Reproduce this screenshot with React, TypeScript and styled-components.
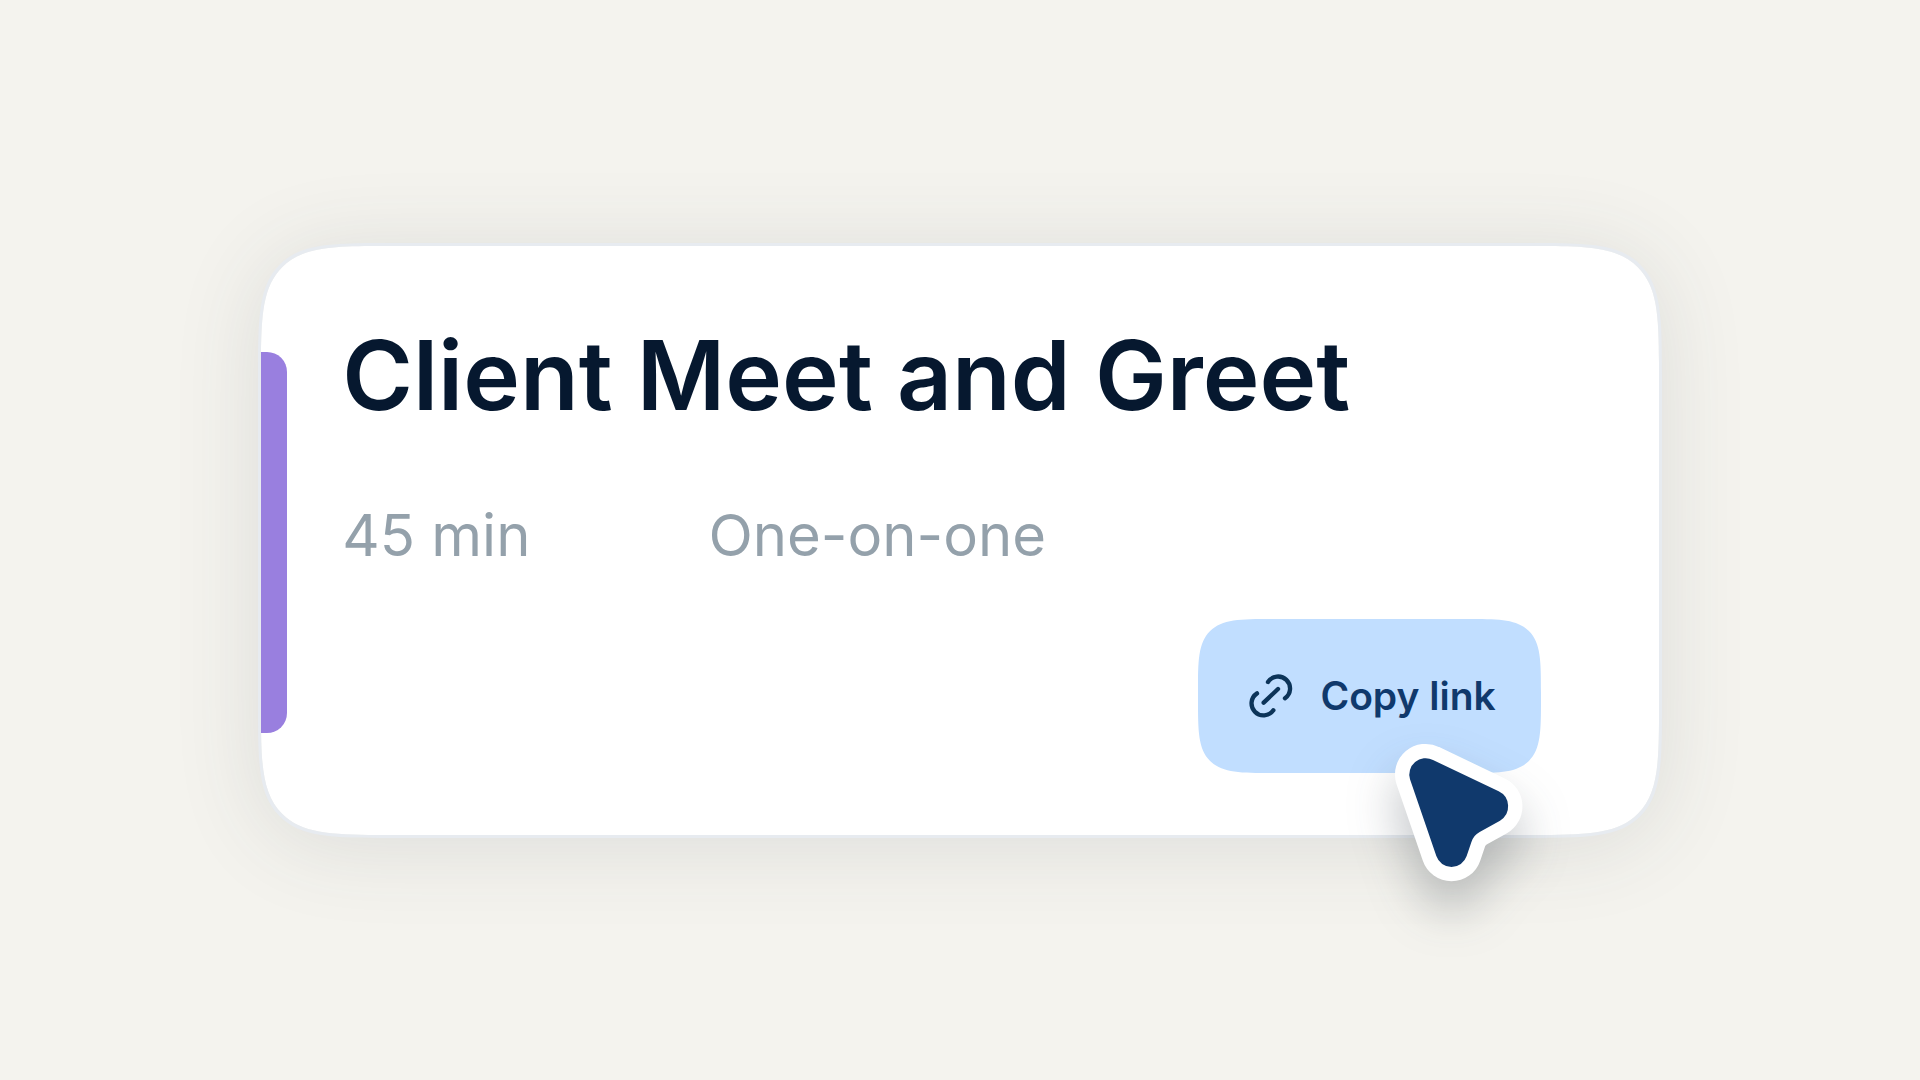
import React from "react";
import styled, { createGlobalStyle } from "styled-components";

const GlobalStyle = createGlobalStyle`
  *, *::before, *::after {
    box-sizing: border-box;
  }

  body {
    margin: 0;
    background: #f4f3ee;
    font-family: Inter, "Liberation Sans", sans-serif;
  }
`;

const Stage = styled.main`
  display: flex;
  align-items: center;
  justify-content: center;
  min-height: 100vh;
`;

const Card = styled.article`
  position: relative;
  display: flex;
  flex-direction: column;
  width: 73.1%;
  padding: 79px 118px 62px 81px;
  border: 3px solid #e7ebf0;
  border-radius: 72px;
  background: #ffffff;
  background-clip: padding-box;
  box-shadow: 0 8px 88px rgba(60, 65, 70, 0.12);

  @supports (corner-shape: squircle) {
    border-radius: 136px;
    corner-shape: squircle;
  }
`;

const Accent = styled.span`
  position: absolute;
  top: 106px;
  bottom: 102px;
  left: 0;
  width: 26px;
  border-radius: 0 20px 20px 0;
  background: #997fdf;
`;

const Title = styled.h1`
  margin: 0 0 78px;
  color: #06182f;
  font-size: 96px;
  font-weight: 600;
  line-height: 100px;
`;

const Details = styled.ul`
  display: flex;
  gap: 178px;
  margin: 0 0 52px;
  padding: 0;
  list-style: none;
`;

const Detail = styled.li`
  color: #94a1ab;
  font-size: 58px;
  line-height: 64px;
`;

const Action = styled.div`
  position: relative;
  align-self: flex-end;
`;

const CopyButton = styled.button`
  display: flex;
  align-items: center;
  gap: 26px;
  height: 154px;
  padding: 0 45px 0 50px;
  border: 0;
  border-radius: 46px;
  background: #c1deff;
  color: #10396c;
  font-family: inherit;
  font-size: 39px;
  font-weight: 600;
  line-height: 48px;
  cursor: pointer;

  @supports (corner-shape: squircle) {
    border-radius: 76px;
    corner-shape: squircle;
  }
`;

const LinkGlyph = styled.svg`
  width: 46px;
  height: 46px;
  fill: none;
  stroke: #0c3459;
  stroke-width: 13;
  stroke-linecap: round;
`;

const Pointer = styled.svg`
  position: absolute;
  right: -18px;
  bottom: -148px;
  width: 200px;
  height: 200px;
  overflow: visible;
  pointer-events: none;
  filter: drop-shadow(0 28px 24px rgba(40, 50, 60, 0.28));
`;

const POINTER_PATH =
  "M222 117 L419 211 A50 50 0 0 1 423 299 L362 333 Q343 343 337 364 L323 405 A48 48 0 0 1 232 405 L153 175 A49 49 0 0 1 222 117 Z";

function LinkIcon() {
  return (
    <LinkGlyph viewBox="56 38 138 138" aria-hidden="true">
      <path d="M116 65 A36 36 0 1 1 167 114" />
      <path d="M83 99 A36 36 0 1 0 132 150" />
      <path d="M103 127 L146 86" />
    </LinkGlyph>
  );
}

function PointerIcon() {
  return (
    <Pointer viewBox="0 0 600 600" aria-hidden="true">
      <path d={POINTER_PATH} fill="#fff" stroke="#fff" strokeWidth="86" strokeLinejoin="round" />
      <path d={POINTER_PATH} fill="#10396c" />
    </Pointer>
  );
}

const details = ["45 min", "One-on-one"];

export default function App() {
  return (
    <>
      <GlobalStyle />
      <Stage>
        <Card>
          <Accent />
          <Title>Client Meet and Greet</Title>
          <Details>
            {details.map((text) => (
              <Detail key={text}>{text}</Detail>
            ))}
          </Details>
          <Action>
            <CopyButton type="button">
              <LinkIcon />
              Copy link
            </CopyButton>
            <PointerIcon />
          </Action>
        </Card>
      </Stage>
    </>
  );
}
